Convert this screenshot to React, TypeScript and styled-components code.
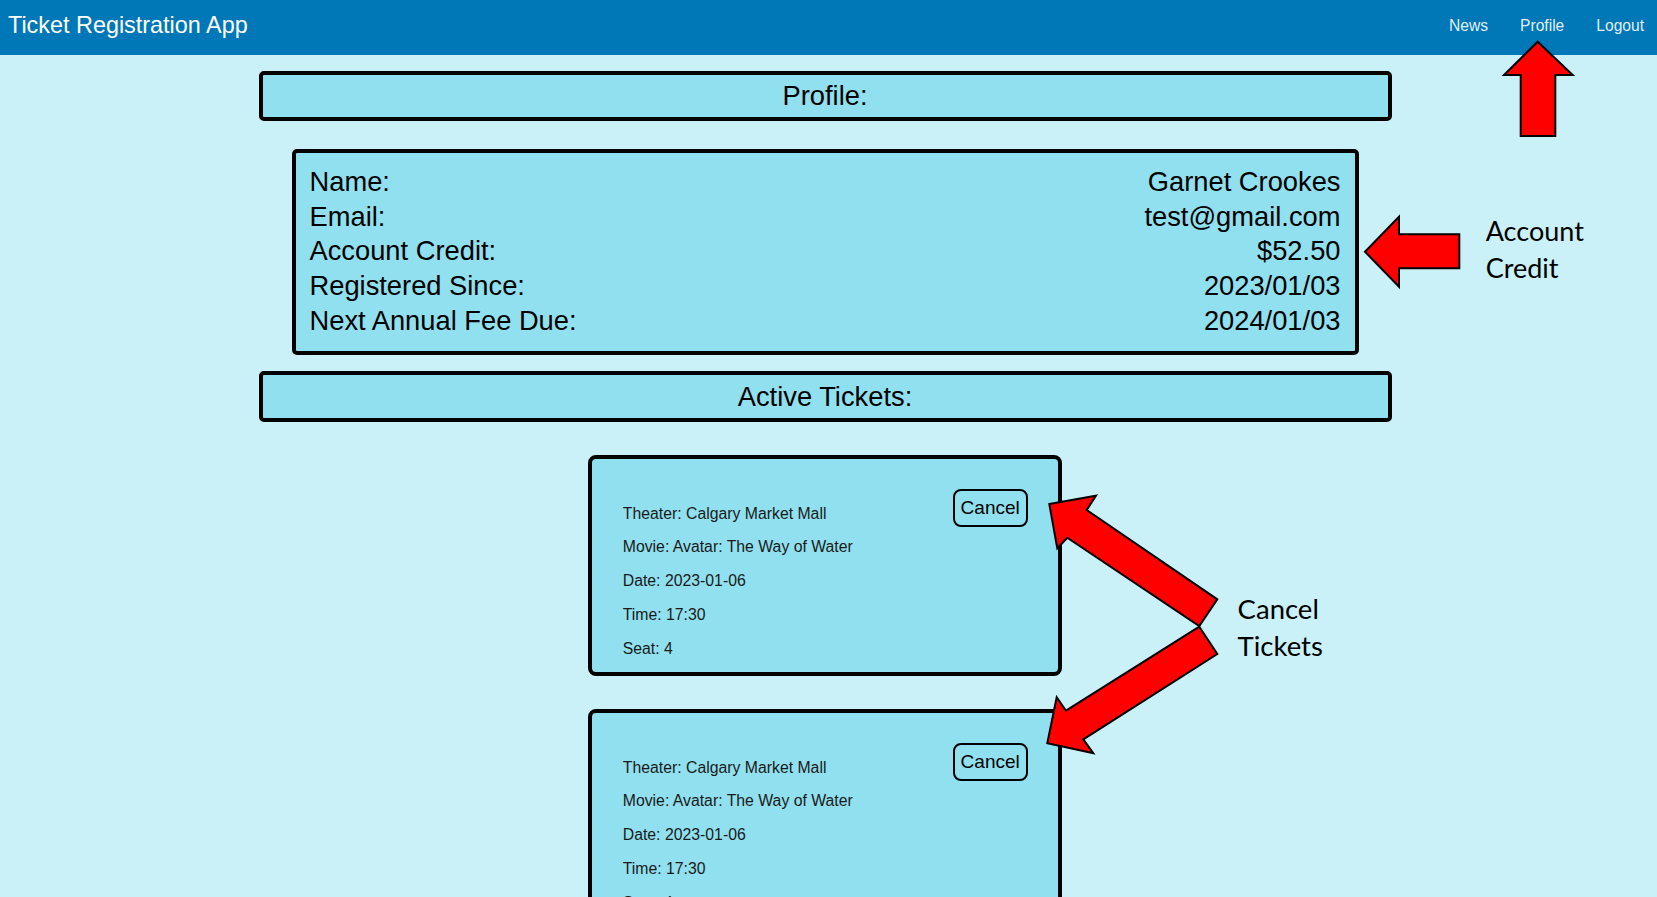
import * as React from 'react';
import styled, { createGlobalStyle } from 'styled-components';

const GlobalStyle = createGlobalStyle`
	html,
	body {
		margin: 0;
		padding: 0;
		background-color: #caf0f8;
		overflow: hidden;
	}
	body {
		font-family: 'Liberation Sans', Arial, sans-serif;
		color: #000;
	}
`;

const Page = styled.div`
	position: relative;
	width: 100%;
	min-height: 100vh;
	background-color: #caf0f8;
`;

const NavBar = styled.header`
	display: flex;
	align-items: center;
	justify-content: space-between;
	box-sizing: border-box;
	height: 55px;
	padding: 0 13px 4px 8px;
	background-color: #0077b6;
`;

const Brand = styled.div`
	font-size: 23.4px;
	color: #fff;
`;

const NavLinks = styled.nav`
	display: flex;
	gap: 32px;
`;

const NavLink = styled.a`
	font-size: 15.6px;
	color: rgba(255, 255, 255, 0.9);
	text-decoration: none;
	cursor: pointer;
`;

const Main = styled.main`
	display: flex;
	flex-direction: column;
	align-items: center;
	padding: 15.7px 7px 0 0;
`;

const SectionTitle = styled.h2<{ $gap?: number }>`
	box-sizing: border-box;
	width: 1133px;
	margin: ${(p) => p.$gap ?? 0}px 0 0;
	padding: 5.4px 0;
	border: 4px solid #000;
	border-radius: 5px;
	background-color: #90e0ef;
	text-align: center;
	font-size: 27.3px;
	font-weight: normal;
	line-height: normal;
`;

const InfoCard = styled.section`
	box-sizing: border-box;
	width: 1067px;
	margin-top: 27.3px;
	padding: 12px 14px;
	border: 4px solid #000;
	border-radius: 5px;
	background-color: #90e0ef;
	font-size: 27.3px;
	line-height: 34.75px;
`;

const InfoRow = styled.div`
	display: flex;
	justify-content: space-between;
`;

const TicketList = styled.div`
	display: flex;
	flex-direction: column;
	gap: 33px;
	margin-top: 33px;
`;

const TicketCard = styled.div`
	box-sizing: border-box;
	display: flex;
	justify-content: space-between;
	align-items: flex-start;
	width: 473.5px;
	padding: 30px 30px 0 30.5px;
	border: 4px solid #000;
	border-radius: 8px;
	background-color: #90e0ef;
`;

const TicketInfo = styled.div`
	display: flex;
	flex-direction: column;
	gap: 15.6px;
	padding: 15.6px 0 14px;
`;

const TicketField = styled.p`
	margin: 0;
	font-size: 15.8px;
	line-height: 18.2px;
	color: #1a1a1a;
`;

const CancelButton = styled.button`
	padding: 6px;
	border: 2px solid #000;
	border-radius: 8px;
	background-color: transparent;
	font-family: 'Liberation Sans', Arial, sans-serif;
	font-size: 19px;
	line-height: normal;
	color: #000;
	cursor: pointer;
`;

const Overlay = styled.svg`
	position: absolute;
	top: 0;
	left: 0;
	z-index: 10;
	pointer-events: none;
`;

const Note = styled.div<{ $x: number; $y: number; $size: number; $lh: number }>`
	position: absolute;
	left: ${(p) => p.$x}px;
	top: ${(p) => p.$y}px;
	z-index: 10;
	font-family: Lato, 'Open Sans', sans-serif;
	font-size: ${(p) => p.$size}px;
	line-height: ${(p) => p.$lh}px;
	color: #000;
	pointer-events: none;
`;

const profile = [
	['Name:', 'Garnet Crookes'],
	['Email:', 'test@gmail.com'],
	['Account Credit:', '$52.50'],
	['Registered Since:', '2023/01/03'],
	['Next Annual Fee Due:', '2024/01/03'],
];

const tickets = [
	{ theater: 'Calgary Market Mall', movie: 'Avatar: The Way of Water', date: '2023-01-06', time: '17:30', seat: 4 },
	{ theater: 'Calgary Market Mall', movie: 'Avatar: The Way of Water', date: '2023-01-06', time: '17:30', seat: 4 },
];

const arrows = [
	// up arrow pointing at Profile link
	'1537.7,41.7 1572.7,75 1555.3,75 1555.3,136 1520.7,136 1520.7,75 1504,75',
	// left arrow pointing at the account box
	'1365,251.7 1399,216.7 1399,234.3 1459.3,234.3 1459.3,268.3 1399,268.3 1399,286.7',
	// cancel arrows
	'1049.3,504 1096,495.7 1086.7,510 1217.3,599.3 1199.3,626 1067.3,537.7 1057.3,548.3',
	'1199.3,626.7 1217.3,654 1083.3,739.3 1093.3,753.3 1047.3,743.3 1056.7,697.3 1066,710.7',
];

const App: React.FunctionComponent = () => {
	return (
		<>
			<GlobalStyle />
			<Page>
				<NavBar>
					<Brand>Ticket Registration App</Brand>
					<NavLinks>
						<NavLink>News</NavLink>
						<NavLink>Profile</NavLink>
						<NavLink>Logout</NavLink>
					</NavLinks>
				</NavBar>
				<Main>
					<SectionTitle>Profile:</SectionTitle>
					<InfoCard>
						{profile.map(([label, value]) => (
							<InfoRow key={label}>
								<span>{label}</span>
								<span>{value}</span>
							</InfoRow>
						))}
					</InfoCard>
					<SectionTitle $gap={16.7}>Active Tickets:</SectionTitle>
					<TicketList>
						{tickets.map((t, i) => (
							<TicketCard key={i}>
								<TicketInfo>
									<TicketField>Theater: {t.theater}</TicketField>
									<TicketField>Movie: {t.movie}</TicketField>
									<TicketField>Date: {t.date}</TicketField>
									<TicketField>Time: {t.time}</TicketField>
									<TicketField>Seat: {t.seat}</TicketField>
								</TicketInfo>
								<CancelButton>Cancel</CancelButton>
							</TicketCard>
						))}
					</TicketList>
				</Main>
				<Overlay width="1657" height="897" viewBox="0 0 1657 897">
					{arrows.map((pts, i) => (
						<polygon key={i} points={pts} fill="#ff0000" stroke="#000" strokeWidth="2" strokeLinejoin="miter" />
					))}
				</Overlay>
				<Note $x={1485.7} $y={213} $size={27} $lh={36.6}>
					Account
					<br />
					Credit
				</Note>
				<Note $x={1237.6} $y={589.5} $size={27.5} $lh={37.7}>
					Cancel
					<br />
					Tickets
				</Note>
			</Page>
		</>
	);
};

export default App;
